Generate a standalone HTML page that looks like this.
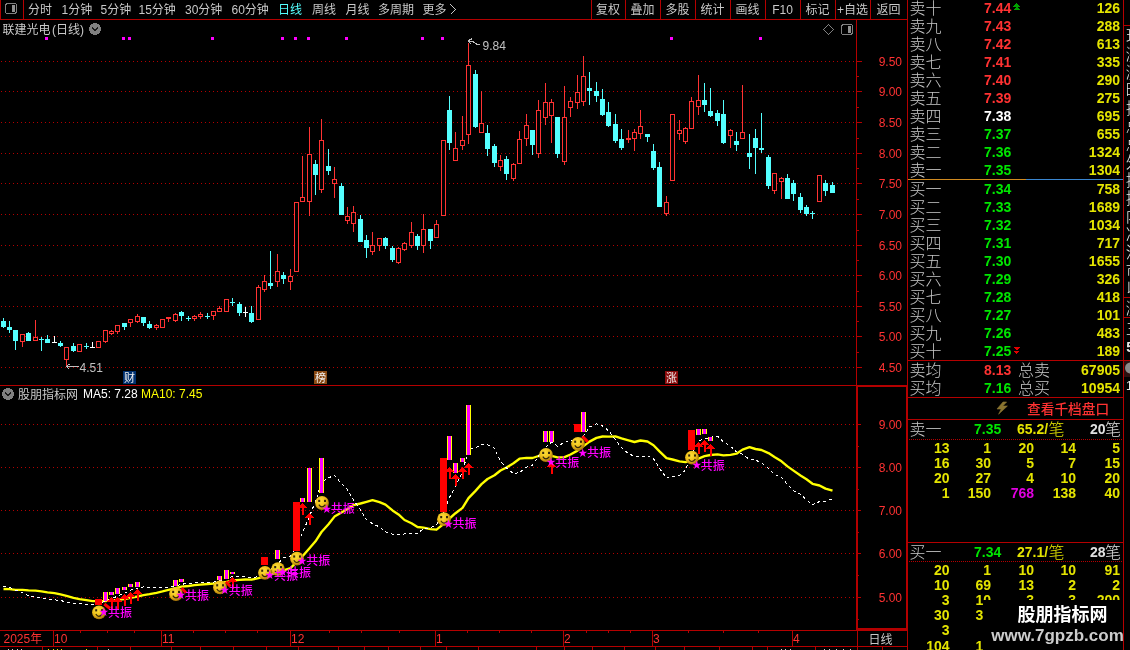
<!DOCTYPE html>
<html lang="zh"><head><meta charset="utf-8"><title>联建光电 日线</title><style>
html,body{margin:0;padding:0;background:#000;}
body{width:1130px;height:650px;overflow:hidden;}
svg{display:block;will-change:transform;}
text{font-family:"Liberation Sans","Noto Sans CJK SC",sans-serif;}
.ax{font-size:12px;}
.dt{font-size:12px;}
.tb{font-size:12px;}
.tag{font-size:11px;}
.sig{font-size:12px;font-weight:500;}
.star{font-size:9.5px;}
.lab{font-size:16px;font-weight:300;}
.num{font-size:14px;font-weight:bold;}
.cjk14{font-size:13.7px;font-weight:500;}
.wm1{font-size:18px;font-weight:bold;}
.wm2{font-size:17px;font-weight:bold;}
</style></head><body><svg width="1130" height="650" viewBox="0 0 1130 650" shape-rendering="crispEdges"><defs><radialGradient id="sg" cx="0.4" cy="0.35" r="0.7"><stop offset="0" stop-color="#ffe23a"/><stop offset="0.55" stop-color="#ecbc18"/><stop offset="1" stop-color="#9a6608"/></radialGradient></defs><rect width="1130" height="650" fill="#000"/>
<rect x="0" y="0" width="1" height="20" fill="#b40000"/>
<rect x="0" y="19" width="908" height="1" fill="#b40000"/>
<rect x="23" y="0" width="1" height="20" fill="#b40000"/>
<rect x="591" y="0" width="1" height="20" fill="#b40000"/>
<rect x="625" y="0" width="1" height="20" fill="#b40000"/>
<rect x="660" y="0" width="1" height="20" fill="#b40000"/>
<rect x="695" y="0" width="1" height="20" fill="#b40000"/>
<rect x="730" y="0" width="1" height="20" fill="#b40000"/>
<rect x="765" y="0" width="1" height="20" fill="#b40000"/>
<rect x="800" y="0" width="1" height="20" fill="#b40000"/>
<rect x="835" y="0" width="1" height="20" fill="#b40000"/>
<rect x="870" y="0" width="1" height="20" fill="#b40000"/>
<rect x="856" y="20" width="1" height="366" fill="#b40000"/>
<rect x="907" y="0" width="1" height="650" fill="#b40000"/>
<rect x="0" y="385" width="857" height="1" fill="#b40000"/>
<rect x="856" y="385" width="2" height="246" fill="#b40000"/>
<rect x="906" y="385" width="2" height="246" fill="#b40000"/>
<rect x="856" y="385" width="52" height="2" fill="#b40000"/>
<rect x="0" y="630" width="908" height="1" fill="#b40000"/>
<rect x="0" y="646" width="908" height="1" fill="#b40000"/>
<rect x="1123" y="0" width="1" height="650" fill="#b40000"/>
<path d="M1 61.5H854" stroke="#b40000" stroke-width="1" stroke-dasharray="1 3" fill="none"/>
<rect x="857" y="61" width="5" height="1" fill="#b40000"/>
<text x="902" y="66" class="ax" fill="#ff3232" text-anchor="end">9.50</text>
<rect x="857" y="76" width="2" height="1" fill="#b40000"/>
<path d="M1 91.5H854" stroke="#b40000" stroke-width="1" stroke-dasharray="1 3" fill="none"/>
<rect x="857" y="91" width="5" height="1" fill="#b40000"/>
<text x="902" y="96" class="ax" fill="#ff3232" text-anchor="end">9.00</text>
<rect x="857" y="107" width="2" height="1" fill="#b40000"/>
<path d="M1 122.5H854" stroke="#b40000" stroke-width="1" stroke-dasharray="1 3" fill="none"/>
<rect x="857" y="122" width="5" height="1" fill="#b40000"/>
<text x="902" y="127" class="ax" fill="#ff3232" text-anchor="end">8.50</text>
<rect x="857" y="138" width="2" height="1" fill="#b40000"/>
<path d="M1 153.5H854" stroke="#b40000" stroke-width="1" stroke-dasharray="1 3" fill="none"/>
<rect x="857" y="153" width="5" height="1" fill="#b40000"/>
<text x="902" y="158" class="ax" fill="#ff3232" text-anchor="end">8.00</text>
<rect x="857" y="168" width="2" height="1" fill="#b40000"/>
<path d="M1 183.5H854" stroke="#b40000" stroke-width="1" stroke-dasharray="1 3" fill="none"/>
<rect x="857" y="183" width="5" height="1" fill="#b40000"/>
<text x="902" y="188" class="ax" fill="#ff3232" text-anchor="end">7.50</text>
<rect x="857" y="199" width="2" height="1" fill="#b40000"/>
<path d="M1 214.5H854" stroke="#b40000" stroke-width="1" stroke-dasharray="1 3" fill="none"/>
<rect x="857" y="214" width="5" height="1" fill="#b40000"/>
<text x="902" y="219" class="ax" fill="#ff3232" text-anchor="end">7.00</text>
<rect x="857" y="230" width="2" height="1" fill="#b40000"/>
<path d="M1 245.5H854" stroke="#b40000" stroke-width="1" stroke-dasharray="1 3" fill="none"/>
<rect x="857" y="245" width="5" height="1" fill="#b40000"/>
<text x="902" y="250" class="ax" fill="#ff3232" text-anchor="end">6.50</text>
<rect x="857" y="260" width="2" height="1" fill="#b40000"/>
<path d="M1 275.5H854" stroke="#b40000" stroke-width="1" stroke-dasharray="1 3" fill="none"/>
<rect x="857" y="275" width="5" height="1" fill="#b40000"/>
<text x="902" y="280" class="ax" fill="#ff3232" text-anchor="end">6.00</text>
<rect x="857" y="291" width="2" height="1" fill="#b40000"/>
<path d="M1 306.5H854" stroke="#b40000" stroke-width="1" stroke-dasharray="1 3" fill="none"/>
<rect x="857" y="306" width="5" height="1" fill="#b40000"/>
<text x="902" y="311" class="ax" fill="#ff3232" text-anchor="end">5.50</text>
<rect x="857" y="321" width="2" height="1" fill="#b40000"/>
<path d="M1 336.5H854" stroke="#b40000" stroke-width="1" stroke-dasharray="1 3" fill="none"/>
<rect x="857" y="336" width="5" height="1" fill="#b40000"/>
<text x="902" y="341" class="ax" fill="#ff3232" text-anchor="end">5.00</text>
<rect x="857" y="352" width="2" height="1" fill="#b40000"/>
<path d="M1 367.5H854" stroke="#b40000" stroke-width="1" stroke-dasharray="1 3" fill="none"/>
<rect x="857" y="367" width="5" height="1" fill="#b40000"/>
<text x="902" y="372" class="ax" fill="#ff3232" text-anchor="end">4.50</text>
<path d="M1 424.5H854" stroke="#b40000" stroke-width="1" stroke-dasharray="1 3" fill="none"/>
<rect x="858" y="424" width="3" height="1" fill="#b40000"/>
<text x="902" y="429" class="ax" fill="#ff3232" text-anchor="end">9.00</text>
<rect x="858" y="446" width="1" height="1" fill="#b40000"/>
<path d="M1 467.5H854" stroke="#b40000" stroke-width="1" stroke-dasharray="1 3" fill="none"/>
<rect x="858" y="467" width="3" height="1" fill="#b40000"/>
<text x="902" y="472" class="ax" fill="#ff3232" text-anchor="end">8.00</text>
<rect x="858" y="489" width="1" height="1" fill="#b40000"/>
<path d="M1 510.5H854" stroke="#b40000" stroke-width="1" stroke-dasharray="1 3" fill="none"/>
<rect x="858" y="510" width="3" height="1" fill="#b40000"/>
<text x="902" y="515" class="ax" fill="#ff3232" text-anchor="end">7.00</text>
<rect x="858" y="532" width="1" height="1" fill="#b40000"/>
<path d="M1 553.5H854" stroke="#b40000" stroke-width="1" stroke-dasharray="1 3" fill="none"/>
<rect x="858" y="553" width="3" height="1" fill="#b40000"/>
<text x="902" y="558" class="ax" fill="#ff3232" text-anchor="end">6.00</text>
<rect x="858" y="575" width="1" height="1" fill="#b40000"/>
<path d="M1 597.5H854" stroke="#b40000" stroke-width="1" stroke-dasharray="1 3" fill="none"/>
<rect x="858" y="597" width="3" height="1" fill="#b40000"/>
<text x="902" y="602" class="ax" fill="#ff3232" text-anchor="end">5.00</text>
<rect x="858" y="619" width="1" height="1" fill="#b40000"/>
<rect x="45" y="37" width="3" height="3" fill="#ff00ff"/>
<rect x="122" y="37" width="3" height="3" fill="#ff00ff"/>
<rect x="128" y="37" width="3" height="3" fill="#ff00ff"/>
<rect x="211" y="37" width="3" height="3" fill="#ff00ff"/>
<rect x="281" y="37" width="3" height="3" fill="#ff00ff"/>
<rect x="294" y="37" width="3" height="3" fill="#ff00ff"/>
<rect x="307" y="37" width="3" height="3" fill="#ff00ff"/>
<rect x="345" y="37" width="3" height="3" fill="#ff00ff"/>
<rect x="421" y="37" width="3" height="3" fill="#ff00ff"/>
<rect x="441" y="37" width="3" height="3" fill="#ff00ff"/>
<rect x="670" y="37" width="3" height="3" fill="#ff00ff"/>
<rect x="759" y="37" width="3" height="3" fill="#ff00ff"/>
<rect x="3" y="318" width="1" height="10" fill="#54ffff"/>
<rect x="1" y="321" width="5" height="6" fill="#54ffff"/>
<rect x="9" y="321" width="1" height="12" fill="#54ffff"/>
<rect x="7" y="327" width="5" height="3" fill="#54ffff"/>
<rect x="15" y="330" width="1" height="20" fill="#54ffff"/>
<rect x="13" y="330" width="5" height="11" fill="#54ffff"/>
<rect x="22" y="342" width="1" height="5" fill="#ff3232"/>
<rect x="20.5" y="334.5" width="4" height="7" fill="#000" stroke="#ff3232" stroke-width="1"/>
<rect x="28" y="332" width="1" height="9" fill="#54ffff"/>
<rect x="26" y="333" width="5" height="8" fill="#54ffff"/>
<rect x="35" y="320" width="1" height="17" fill="#ff3232"/>
<rect x="33.5" y="337.5" width="4" height="3" fill="#000" stroke="#ff3232" stroke-width="1"/>
<rect x="41" y="337" width="1" height="14" fill="#54ffff"/>
<rect x="39" y="339" width="5" height="1" fill="#54ffff"/>
<rect x="47" y="335" width="1" height="8" fill="#54ffff"/>
<rect x="45" y="339" width="5" height="4" fill="#54ffff"/>
<rect x="54" y="336" width="1" height="7" fill="#ffffff"/>
<rect x="52" y="342" width="5" height="1" fill="#ffffff"/>
<rect x="60" y="341" width="1" height="6" fill="#54ffff"/>
<rect x="58" y="343" width="5" height="3" fill="#54ffff"/>
<rect x="66" y="360" width="1" height="7" fill="#ff3232"/>
<rect x="64.5" y="347.5" width="4" height="12" fill="#000" stroke="#ff3232" stroke-width="1"/>
<rect x="73" y="343" width="1" height="9" fill="#54ffff"/>
<rect x="71" y="346" width="5" height="5" fill="#54ffff"/>
<rect x="77.5" y="344.5" width="4" height="7" fill="#000" stroke="#ff3232" stroke-width="1"/>
<rect x="86" y="343" width="1" height="6" fill="#54ffff"/>
<rect x="84" y="346" width="5" height="1" fill="#54ffff"/>
<rect x="92" y="342" width="1" height="6" fill="#ffffff"/>
<rect x="90" y="347" width="5" height="1" fill="#ffffff"/>
<rect x="96.5" y="341.5" width="4" height="6" fill="#000" stroke="#ff3232" stroke-width="1"/>
<rect x="105" y="342" width="1" height="1" fill="#ff3232"/>
<rect x="103.5" y="330.5" width="4" height="11" fill="#000" stroke="#ff3232" stroke-width="1"/>
<rect x="111" y="330" width="1" height="1" fill="#ff3232"/>
<rect x="111" y="334" width="1" height="1" fill="#ff3232"/>
<rect x="109.5" y="331.5" width="4" height="2" fill="#000" stroke="#ff3232" stroke-width="1"/>
<rect x="117" y="332" width="1" height="2" fill="#ff3232"/>
<rect x="115.5" y="325.5" width="4" height="6" fill="#000" stroke="#ff3232" stroke-width="1"/>
<rect x="124" y="323" width="1" height="7" fill="#54ffff"/>
<rect x="122" y="323" width="5" height="4" fill="#54ffff"/>
<rect x="130" y="323" width="1" height="4" fill="#ff3232"/>
<rect x="128.5" y="319.5" width="4" height="3" fill="#000" stroke="#ff3232" stroke-width="1"/>
<rect x="137" y="314" width="1" height="2" fill="#ff3232"/>
<rect x="137" y="322" width="1" height="1" fill="#ff3232"/>
<rect x="135.5" y="316.5" width="4" height="5" fill="#000" stroke="#ff3232" stroke-width="1"/>
<rect x="143" y="317" width="1" height="9" fill="#54ffff"/>
<rect x="141" y="317" width="5" height="6" fill="#54ffff"/>
<rect x="149" y="321" width="1" height="8" fill="#54ffff"/>
<rect x="147" y="324" width="5" height="4" fill="#54ffff"/>
<rect x="156" y="324" width="1" height="1" fill="#ff3232"/>
<rect x="156" y="328" width="1" height="2" fill="#ff3232"/>
<rect x="154.5" y="325.5" width="4" height="2" fill="#000" stroke="#ff3232" stroke-width="1"/>
<rect x="160.5" y="319.5" width="4" height="8" fill="#000" stroke="#ff3232" stroke-width="1"/>
<rect x="168" y="317" width="1" height="5" fill="#ff3232"/>
<rect x="166" y="317" width="5" height="2" fill="#ff3232"/>
<rect x="175" y="313" width="1" height="1" fill="#ff3232"/>
<rect x="175" y="321" width="1" height="1" fill="#ff3232"/>
<rect x="173.5" y="314.5" width="4" height="6" fill="#000" stroke="#ff3232" stroke-width="1"/>
<rect x="181" y="311" width="1" height="10" fill="#54ffff"/>
<rect x="179" y="312" width="5" height="4" fill="#54ffff"/>
<rect x="188" y="316" width="1" height="5" fill="#54ffff"/>
<rect x="186" y="318" width="5" height="1" fill="#54ffff"/>
<rect x="194" y="315" width="1" height="1" fill="#ff3232"/>
<rect x="194" y="319" width="1" height="2" fill="#ff3232"/>
<rect x="192.5" y="316.5" width="4" height="2" fill="#000" stroke="#ff3232" stroke-width="1"/>
<rect x="200" y="312" width="1" height="2" fill="#ff3232"/>
<rect x="200" y="317" width="1" height="2" fill="#ff3232"/>
<rect x="198.5" y="314.5" width="4" height="2" fill="#000" stroke="#ff3232" stroke-width="1"/>
<rect x="207" y="313" width="1" height="6" fill="#54ffff"/>
<rect x="205" y="316" width="5" height="1" fill="#54ffff"/>
<rect x="213" y="316" width="1" height="4" fill="#ff3232"/>
<rect x="211.5" y="311.5" width="4" height="4" fill="#000" stroke="#ff3232" stroke-width="1"/>
<rect x="219" y="306" width="1" height="2" fill="#ff3232"/>
<rect x="217.5" y="308.5" width="4" height="3" fill="#000" stroke="#ff3232" stroke-width="1"/>
<rect x="224.5" y="299.5" width="4" height="12" fill="#000" stroke="#ff3232" stroke-width="1"/>
<rect x="232" y="298" width="1" height="8" fill="#54ffff"/>
<rect x="230" y="302" width="5" height="1" fill="#54ffff"/>
<rect x="239" y="302" width="1" height="14" fill="#54ffff"/>
<rect x="237" y="304" width="5" height="9" fill="#54ffff"/>
<rect x="245" y="307" width="1" height="10" fill="#ffffff"/>
<rect x="243" y="312" width="5" height="1" fill="#ffffff"/>
<rect x="251" y="306" width="1" height="17" fill="#54ffff"/>
<rect x="249" y="313" width="5" height="9" fill="#54ffff"/>
<rect x="258" y="285" width="1" height="2" fill="#ff3232"/>
<rect x="256.5" y="287.5" width="4" height="32" fill="#000" stroke="#ff3232" stroke-width="1"/>
<rect x="264" y="275" width="1" height="6" fill="#ff3232"/>
<rect x="264" y="290" width="1" height="2" fill="#ff3232"/>
<rect x="262.5" y="281.5" width="4" height="8" fill="#000" stroke="#ff3232" stroke-width="1"/>
<rect x="270" y="251" width="1" height="38" fill="#54ffff"/>
<rect x="268" y="283" width="5" height="3" fill="#54ffff"/>
<rect x="277" y="254" width="1" height="17" fill="#ff3232"/>
<rect x="277" y="282" width="1" height="5" fill="#ff3232"/>
<rect x="275.5" y="271.5" width="4" height="10" fill="#000" stroke="#ff3232" stroke-width="1"/>
<rect x="283" y="272" width="1" height="12" fill="#54ffff"/>
<rect x="281" y="275" width="5" height="4" fill="#54ffff"/>
<rect x="290" y="269" width="1" height="7" fill="#ff3232"/>
<rect x="290" y="282" width="1" height="8" fill="#ff3232"/>
<rect x="288.5" y="276.5" width="4" height="5" fill="#000" stroke="#ff3232" stroke-width="1"/>
<rect x="294.5" y="202.5" width="4" height="69" fill="#000" stroke="#ff3232" stroke-width="1"/>
<rect x="302" y="156" width="1" height="41" fill="#ff3232"/>
<rect x="300.5" y="197.5" width="4" height="4" fill="#000" stroke="#ff3232" stroke-width="1"/>
<rect x="309" y="127" width="1" height="27" fill="#ff3232"/>
<rect x="309" y="202" width="1" height="14" fill="#ff3232"/>
<rect x="307.5" y="154.5" width="4" height="47" fill="#000" stroke="#ff3232" stroke-width="1"/>
<rect x="315" y="160" width="1" height="35" fill="#54ffff"/>
<rect x="313" y="164" width="5" height="11" fill="#54ffff"/>
<rect x="321" y="119" width="1" height="21" fill="#ff3232"/>
<rect x="321" y="190" width="1" height="3" fill="#ff3232"/>
<rect x="319.5" y="140.5" width="4" height="49" fill="#000" stroke="#ff3232" stroke-width="1"/>
<rect x="328" y="149" width="1" height="26" fill="#54ffff"/>
<rect x="326" y="166" width="5" height="5" fill="#54ffff"/>
<rect x="334" y="167" width="1" height="12" fill="#ff3232"/>
<rect x="334" y="184" width="1" height="14" fill="#ff3232"/>
<rect x="332.5" y="179.5" width="4" height="4" fill="#000" stroke="#ff3232" stroke-width="1"/>
<rect x="341" y="183" width="1" height="32" fill="#54ffff"/>
<rect x="339" y="186" width="5" height="29" fill="#54ffff"/>
<rect x="347" y="207" width="1" height="9" fill="#ff3232"/>
<rect x="347" y="221" width="1" height="3" fill="#ff3232"/>
<rect x="345.5" y="216.5" width="4" height="4" fill="#000" stroke="#ff3232" stroke-width="1"/>
<rect x="353" y="206" width="1" height="6" fill="#ff3232"/>
<rect x="353" y="224" width="1" height="8" fill="#ff3232"/>
<rect x="351.5" y="212.5" width="4" height="11" fill="#000" stroke="#ff3232" stroke-width="1"/>
<rect x="360" y="215" width="1" height="27" fill="#54ffff"/>
<rect x="358" y="219" width="5" height="23" fill="#54ffff"/>
<rect x="366" y="235" width="1" height="23" fill="#54ffff"/>
<rect x="364" y="240" width="5" height="8" fill="#54ffff"/>
<rect x="372" y="232" width="1" height="13" fill="#ff3232"/>
<rect x="372" y="252" width="1" height="3" fill="#ff3232"/>
<rect x="370.5" y="245.5" width="4" height="6" fill="#000" stroke="#ff3232" stroke-width="1"/>
<rect x="379" y="246" width="1" height="5" fill="#ff3232"/>
<rect x="377.5" y="238.5" width="4" height="7" fill="#000" stroke="#ff3232" stroke-width="1"/>
<rect x="385" y="237" width="1" height="12" fill="#54ffff"/>
<rect x="383" y="238" width="5" height="8" fill="#54ffff"/>
<rect x="392" y="246" width="1" height="16" fill="#54ffff"/>
<rect x="390" y="248" width="5" height="12" fill="#54ffff"/>
<rect x="398" y="247" width="1" height="1" fill="#ff3232"/>
<rect x="398" y="263" width="1" height="1" fill="#ff3232"/>
<rect x="396.5" y="248.5" width="4" height="14" fill="#000" stroke="#ff3232" stroke-width="1"/>
<rect x="404" y="242" width="1" height="1" fill="#ff3232"/>
<rect x="404" y="250" width="1" height="1" fill="#ff3232"/>
<rect x="402.5" y="243.5" width="4" height="6" fill="#000" stroke="#ff3232" stroke-width="1"/>
<rect x="411" y="222" width="1" height="10" fill="#ff3232"/>
<rect x="411" y="246" width="1" height="2" fill="#ff3232"/>
<rect x="409.5" y="232.5" width="4" height="13" fill="#000" stroke="#ff3232" stroke-width="1"/>
<rect x="417" y="234" width="1" height="16" fill="#54ffff"/>
<rect x="415" y="236" width="5" height="10" fill="#54ffff"/>
<rect x="423" y="214" width="1" height="15" fill="#ff3232"/>
<rect x="423" y="246" width="1" height="7" fill="#ff3232"/>
<rect x="421.5" y="229.5" width="4" height="16" fill="#000" stroke="#ff3232" stroke-width="1"/>
<rect x="430" y="229" width="1" height="20" fill="#54ffff"/>
<rect x="428" y="229" width="5" height="12" fill="#54ffff"/>
<rect x="436" y="220" width="1" height="4" fill="#ff3232"/>
<rect x="434.5" y="224.5" width="4" height="13" fill="#000" stroke="#ff3232" stroke-width="1"/>
<rect x="441.5" y="140.5" width="4" height="75" fill="#000" stroke="#ff3232" stroke-width="1"/>
<rect x="449" y="96" width="1" height="54" fill="#54ffff"/>
<rect x="447" y="110" width="5" height="33" fill="#54ffff"/>
<rect x="455" y="132" width="1" height="16" fill="#ff3232"/>
<rect x="453.5" y="148.5" width="4" height="12" fill="#000" stroke="#ff3232" stroke-width="1"/>
<rect x="462" y="116" width="1" height="24" fill="#ff3232"/>
<rect x="462" y="146" width="1" height="4" fill="#ff3232"/>
<rect x="460.5" y="140.5" width="4" height="5" fill="#000" stroke="#ff3232" stroke-width="1"/>
<rect x="468" y="43" width="1" height="22" fill="#ff3232"/>
<rect x="468" y="135" width="1" height="9" fill="#ff3232"/>
<rect x="466.5" y="65.5" width="4" height="69" fill="#000" stroke="#ff3232" stroke-width="1"/>
<rect x="475" y="70" width="1" height="58" fill="#54ffff"/>
<rect x="473" y="74" width="5" height="53" fill="#54ffff"/>
<rect x="481" y="91" width="1" height="32" fill="#ff3232"/>
<rect x="479.5" y="123.5" width="4" height="9" fill="#000" stroke="#ff3232" stroke-width="1"/>
<rect x="487" y="125" width="1" height="31" fill="#54ffff"/>
<rect x="485" y="133" width="5" height="16" fill="#54ffff"/>
<rect x="494" y="144" width="1" height="23" fill="#54ffff"/>
<rect x="492" y="146" width="5" height="17" fill="#54ffff"/>
<rect x="500" y="155" width="1" height="5" fill="#ff3232"/>
<rect x="500" y="167" width="1" height="4" fill="#ff3232"/>
<rect x="498.5" y="160.5" width="4" height="6" fill="#000" stroke="#ff3232" stroke-width="1"/>
<rect x="506" y="156" width="1" height="24" fill="#54ffff"/>
<rect x="504" y="159" width="5" height="15" fill="#54ffff"/>
<rect x="513" y="163" width="1" height="1" fill="#ff3232"/>
<rect x="513" y="179" width="1" height="2" fill="#ff3232"/>
<rect x="511.5" y="164.5" width="4" height="14" fill="#000" stroke="#ff3232" stroke-width="1"/>
<rect x="519" y="131" width="1" height="8" fill="#ff3232"/>
<rect x="517.5" y="139.5" width="4" height="24" fill="#000" stroke="#ff3232" stroke-width="1"/>
<rect x="526" y="114" width="1" height="11" fill="#ff3232"/>
<rect x="526" y="139" width="1" height="7" fill="#ff3232"/>
<rect x="524.5" y="125.5" width="4" height="13" fill="#000" stroke="#ff3232" stroke-width="1"/>
<rect x="532" y="130" width="1" height="25" fill="#54ffff"/>
<rect x="530" y="130" width="5" height="15" fill="#54ffff"/>
<rect x="538" y="100" width="1" height="10" fill="#ff3232"/>
<rect x="538" y="154" width="1" height="4" fill="#ff3232"/>
<rect x="536.5" y="110.5" width="4" height="43" fill="#000" stroke="#ff3232" stroke-width="1"/>
<rect x="545" y="83" width="1" height="19" fill="#ff3232"/>
<rect x="545" y="118" width="1" height="7" fill="#ff3232"/>
<rect x="543.5" y="102.5" width="4" height="15" fill="#000" stroke="#ff3232" stroke-width="1"/>
<rect x="551" y="99" width="1" height="3" fill="#ff3232"/>
<rect x="551" y="116" width="1" height="27" fill="#ff3232"/>
<rect x="549.5" y="102.5" width="4" height="13" fill="#000" stroke="#ff3232" stroke-width="1"/>
<rect x="557" y="117" width="1" height="41" fill="#54ffff"/>
<rect x="555" y="117" width="5" height="37" fill="#54ffff"/>
<rect x="564" y="86" width="1" height="31" fill="#ff3232"/>
<rect x="564" y="162" width="1" height="3" fill="#ff3232"/>
<rect x="562.5" y="117.5" width="4" height="44" fill="#000" stroke="#ff3232" stroke-width="1"/>
<rect x="570" y="97" width="1" height="4" fill="#ff3232"/>
<rect x="570" y="108" width="1" height="9" fill="#ff3232"/>
<rect x="568.5" y="101.5" width="4" height="6" fill="#000" stroke="#ff3232" stroke-width="1"/>
<rect x="577" y="75" width="1" height="17" fill="#ff3232"/>
<rect x="577" y="103" width="1" height="6" fill="#ff3232"/>
<rect x="575.5" y="92.5" width="4" height="10" fill="#000" stroke="#ff3232" stroke-width="1"/>
<rect x="583" y="56" width="1" height="20" fill="#ff3232"/>
<rect x="583" y="102" width="1" height="4" fill="#ff3232"/>
<rect x="581.5" y="76.5" width="4" height="25" fill="#000" stroke="#ff3232" stroke-width="1"/>
<rect x="589" y="72" width="1" height="33" fill="#54ffff"/>
<rect x="587" y="88" width="5" height="3" fill="#54ffff"/>
<rect x="596" y="82" width="1" height="20" fill="#54ffff"/>
<rect x="594" y="91" width="5" height="5" fill="#54ffff"/>
<rect x="602" y="89" width="1" height="27" fill="#54ffff"/>
<rect x="600" y="99" width="5" height="16" fill="#54ffff"/>
<rect x="608" y="102" width="1" height="25" fill="#54ffff"/>
<rect x="606" y="112" width="5" height="14" fill="#54ffff"/>
<rect x="615" y="114" width="1" height="29" fill="#54ffff"/>
<rect x="613" y="124" width="5" height="17" fill="#54ffff"/>
<rect x="621" y="129" width="1" height="21" fill="#54ffff"/>
<rect x="619" y="139" width="5" height="9" fill="#54ffff"/>
<rect x="628" y="130" width="1" height="13" fill="#ff3232"/>
<rect x="626" y="138" width="5" height="2" fill="#ff3232"/>
<rect x="634" y="129" width="1" height="3" fill="#ff3232"/>
<rect x="634" y="139" width="1" height="12" fill="#ff3232"/>
<rect x="632.5" y="132.5" width="4" height="6" fill="#000" stroke="#ff3232" stroke-width="1"/>
<rect x="640" y="110" width="1" height="16" fill="#ff3232"/>
<rect x="640" y="134" width="1" height="5" fill="#ff3232"/>
<rect x="638.5" y="126.5" width="4" height="7" fill="#000" stroke="#ff3232" stroke-width="1"/>
<rect x="647" y="134" width="1" height="8" fill="#54ffff"/>
<rect x="645" y="134" width="5" height="3" fill="#54ffff"/>
<rect x="653" y="144" width="1" height="26" fill="#54ffff"/>
<rect x="651" y="151" width="5" height="17" fill="#54ffff"/>
<rect x="659" y="162" width="1" height="45" fill="#54ffff"/>
<rect x="657" y="167" width="5" height="40" fill="#54ffff"/>
<rect x="666" y="196" width="1" height="6" fill="#ff3232"/>
<rect x="666" y="214" width="1" height="2" fill="#ff3232"/>
<rect x="664.5" y="202.5" width="4" height="11" fill="#000" stroke="#ff3232" stroke-width="1"/>
<rect x="670.5" y="114.5" width="4" height="66" fill="#000" stroke="#ff3232" stroke-width="1"/>
<rect x="679" y="120" width="1" height="10" fill="#ff3232"/>
<rect x="679" y="134" width="1" height="6" fill="#ff3232"/>
<rect x="677.5" y="130.5" width="4" height="3" fill="#000" stroke="#ff3232" stroke-width="1"/>
<rect x="685" y="127" width="1" height="1" fill="#ff3232"/>
<rect x="685" y="142" width="1" height="2" fill="#ff3232"/>
<rect x="683.5" y="128.5" width="4" height="13" fill="#000" stroke="#ff3232" stroke-width="1"/>
<rect x="691" y="97" width="1" height="4" fill="#ff3232"/>
<rect x="689.5" y="101.5" width="4" height="27" fill="#000" stroke="#ff3232" stroke-width="1"/>
<rect x="698" y="75" width="1" height="25" fill="#ff3232"/>
<rect x="698" y="107" width="1" height="8" fill="#ff3232"/>
<rect x="696.5" y="100.5" width="4" height="6" fill="#000" stroke="#ff3232" stroke-width="1"/>
<rect x="704" y="83" width="1" height="29" fill="#54ffff"/>
<rect x="702" y="100" width="5" height="5" fill="#54ffff"/>
<rect x="710" y="88" width="1" height="29" fill="#54ffff"/>
<rect x="708" y="111" width="5" height="5" fill="#54ffff"/>
<rect x="717" y="110" width="1" height="16" fill="#54ffff"/>
<rect x="715" y="113" width="5" height="8" fill="#54ffff"/>
<rect x="723" y="100" width="1" height="44" fill="#54ffff"/>
<rect x="721" y="114" width="5" height="29" fill="#54ffff"/>
<rect x="730" y="129" width="1" height="1" fill="#ff3232"/>
<rect x="730" y="136" width="1" height="12" fill="#ff3232"/>
<rect x="728.5" y="130.5" width="4" height="5" fill="#000" stroke="#ff3232" stroke-width="1"/>
<rect x="736" y="132" width="1" height="19" fill="#54ffff"/>
<rect x="734" y="141" width="5" height="4" fill="#54ffff"/>
<rect x="742" y="85" width="1" height="47" fill="#ff3232"/>
<rect x="740.5" y="132.5" width="4" height="6" fill="#000" stroke="#ff3232" stroke-width="1"/>
<rect x="749" y="134" width="1" height="35" fill="#54ffff"/>
<rect x="747" y="153" width="5" height="4" fill="#54ffff"/>
<rect x="755" y="129" width="1" height="45" fill="#54ffff"/>
<rect x="753" y="138" width="5" height="10" fill="#54ffff"/>
<rect x="761" y="113" width="1" height="40" fill="#54ffff"/>
<rect x="759" y="148" width="5" height="2" fill="#54ffff"/>
<rect x="768" y="155" width="1" height="34" fill="#54ffff"/>
<rect x="766" y="157" width="5" height="29" fill="#54ffff"/>
<rect x="774" y="191" width="1" height="3" fill="#ff3232"/>
<rect x="772.5" y="173.5" width="4" height="17" fill="#000" stroke="#ff3232" stroke-width="1"/>
<rect x="781" y="177" width="1" height="1" fill="#ff3232"/>
<rect x="781" y="182" width="1" height="17" fill="#ff3232"/>
<rect x="779.5" y="178.5" width="4" height="3" fill="#000" stroke="#ff3232" stroke-width="1"/>
<rect x="787" y="174" width="1" height="25" fill="#54ffff"/>
<rect x="785" y="178" width="5" height="21" fill="#54ffff"/>
<rect x="793" y="180" width="1" height="21" fill="#54ffff"/>
<rect x="791" y="183" width="5" height="11" fill="#54ffff"/>
<rect x="800" y="193" width="1" height="20" fill="#54ffff"/>
<rect x="798" y="197" width="5" height="13" fill="#54ffff"/>
<rect x="806" y="205" width="1" height="11" fill="#54ffff"/>
<rect x="804" y="207" width="5" height="7" fill="#54ffff"/>
<rect x="812" y="211" width="1" height="8" fill="#54ffff"/>
<rect x="810" y="213" width="5" height="1" fill="#54ffff"/>
<rect x="817.5" y="175.5" width="4" height="26" fill="#000" stroke="#ff3232" stroke-width="1"/>
<rect x="825" y="180" width="1" height="16" fill="#54ffff"/>
<rect x="823" y="183" width="5" height="8" fill="#54ffff"/>
<rect x="832" y="182" width="1" height="11" fill="#54ffff"/>
<rect x="830" y="185" width="5" height="8" fill="#54ffff"/>
<text x="2.6" y="34" class="tb" fill="#c8c8c8">联建光电<tspan dx="1.5">(日线)</tspan></text>
<circle cx="95" cy="29" r="6" fill="#808080"/>
<path d="M92 27.5l3 3l3 -3" stroke="#1a1a1a" stroke-width="1.4" fill="none"/>
<path d="M828.5 24.5l5 5l-5 5l-5 -5z" stroke="#808080" stroke-width="1" fill="none"/>
<rect x="841.5" y="24.5" width="11" height="10" rx="2.5" fill="none" stroke="#808080"/>
<rect x="848" y="26" width="3" height="7" fill="#909090"/>
<path d="M468.5 40.5l4 -2M468.5 40.5l2 3.5M468.5 40.5l5 1.5l3 2l3 1" stroke="#c0c0c0" stroke-width="1" fill="none"/>
<text x="482.5" y="50" class="ax" fill="#c0c0c0">9.84</text>
<path d="M66.5 366.5h12M66.5 366.5l3 -2.5M66.5 366.5l3 3" stroke="#c0c0c0" stroke-width="1" fill="none"/>
<text x="79.5" y="372" class="ax" fill="#c0c0c0">4.51</text>
<rect x="123" y="371" width="13" height="13" fill="#00306e"/>
<text x="129.5" y="382" class="tag" fill="#f0f0f0" text-anchor="middle">财</text>
<rect x="314" y="371" width="13" height="13" fill="#8a4a14"/>
<text x="320.5" y="382" class="tag" fill="#f0f0f0" text-anchor="middle">榜</text>
<rect x="665" y="371" width="13" height="13" fill="#8a0a0a"/>
<text x="671.5" y="382" class="tag" fill="#f0f0f0" text-anchor="middle">涨</text>
<rect x="5.5" y="3.5" width="11" height="10" rx="2.5" fill="none" stroke="#808080"/>
<rect x="12" y="5" width="3" height="7" fill="#909090"/>
<text x="28" y="14" class="tb" fill="#c8c8c8">分时</text>
<text x="61.5" y="14" class="tb" fill="#c8c8c8">1分钟</text>
<text x="100.5" y="14" class="tb" fill="#c8c8c8">5分钟</text>
<text x="138.5" y="14" class="tb" fill="#c8c8c8">15分钟</text>
<text x="185" y="14" class="tb" fill="#c8c8c8">30分钟</text>
<text x="231.5" y="14" class="tb" fill="#c8c8c8">60分钟</text>
<text x="278" y="14" class="tb" fill="#54ffff">日线</text>
<text x="312" y="14" class="tb" fill="#c8c8c8">周线</text>
<text x="345.5" y="14" class="tb" fill="#c8c8c8">月线</text>
<text x="378" y="14" class="tb" fill="#c8c8c8">多周期</text>
<text x="422.5" y="14" class="tb" fill="#c8c8c8">更多</text>
<path d="M450.5 4.5l5 5l-5 5" stroke="#c8c8c8" stroke-width="1" fill="none"/>
<text x="608" y="14" class="tb" fill="#c8c8c8" text-anchor="middle">复权</text>
<text x="642.5" y="14" class="tb" fill="#c8c8c8" text-anchor="middle">叠加</text>
<text x="677.5" y="14" class="tb" fill="#c8c8c8" text-anchor="middle">多股</text>
<text x="712.5" y="14" class="tb" fill="#c8c8c8" text-anchor="middle">统计</text>
<text x="747.5" y="14" class="tb" fill="#c8c8c8" text-anchor="middle">画线</text>
<text x="782.5" y="14" class="tb" fill="#c8c8c8" text-anchor="middle">F10</text>
<text x="817.5" y="14" class="tb" fill="#c8c8c8" text-anchor="middle">标记</text>
<text x="852.5" y="14" class="tb" fill="#c8c8c8" text-anchor="middle">+自选</text>
<text x="888.5" y="14" class="tb" fill="#c8c8c8" text-anchor="middle">返回</text>
<circle cx="8" cy="394" r="6" fill="#808080"/>
<path d="M5 392.5l3 3l3 -3" stroke="#1a1a1a" stroke-width="1.4" fill="none"/>
<text x="18" y="399" class="tb" fill="#c8c8c8">股朋指标网</text>
<text x="83" y="398" class="ax" fill="#ffffff">MA5: 7.28</text>
<text x="141" y="398" class="ax" fill="#ffff00">MA10: 7.45</text>
<polyline points="3.5,589.0 9.5,589.2 15.5,589.8 22.5,589.9 28.5,590.4 35.5,590.7 41.5,591.3 47.5,592.3 54.5,593.2 60.5,594.4 66.5,595.9 73.5,597.8 79.5,599.2 86.5,600.2 92.5,601.1 98.5,601.2 105.5,601.0 111.5,600.4 117.5,599.8 124.5,599.1 130.5,597.8 137.5,596.5 143.5,595.2 149.5,594.2 156.5,592.8 162.5,591.4 168.5,589.8 175.5,588.1 181.5,586.7 188.5,586.0 194.5,585.2 200.5,584.6 207.5,584.0 213.5,583.6 219.5,583.2 226.5,581.9 232.5,580.5 239.5,579.8 245.5,579.5 251.5,579.7 258.5,578.2 264.5,576.4 270.5,574.6 277.5,572.2 283.5,570.3 290.5,568.1 296.5,562.2 302.5,556.2 309.5,548.3 315.5,541.3 321.5,532.0 328.5,524.3 334.5,516.6 341.5,512.6 347.5,509.1 353.5,505.1 360.5,503.5 366.5,501.8 372.5,500.1 379.5,502.1 385.5,504.7 392.5,510.4 398.5,514.4 404.5,520.0 411.5,523.3 417.5,527.0 423.5,527.7 430.5,529.1 436.5,529.7 443.5,524.2 449.5,518.5 455.5,513.2 462.5,507.9 468.5,498.1 475.5,490.9 481.5,484.1 487.5,479.0 494.5,475.2 500.5,470.5 506.5,467.5 513.5,463.3 519.5,458.7 526.5,457.9 532.5,458.0 538.5,456.0 545.5,453.9 551.5,455.9 557.5,457.4 564.5,457.1 570.5,454.5 577.5,450.6 583.5,446.1 589.5,441.6 596.5,437.9 602.5,436.5 608.5,436.6 615.5,436.4 621.5,438.4 628.5,440.3 634.5,442.0 640.5,440.5 647.5,441.5 653.5,445.2 659.5,451.4 666.5,458.2 672.5,459.5 679.5,461.4 685.5,462.1 691.5,460.8 698.5,458.6 704.5,456.2 710.5,455.0 717.5,454.4 723.5,455.3 730.5,454.9 736.5,453.7 742.5,449.6 749.5,447.2 755.5,449.0 761.5,450.0 768.5,453.1 774.5,457.0 781.5,461.3 787.5,466.4 793.5,470.6 800.5,475.5 806.5,479.3 812.5,483.8 819.5,485.5 825.5,488.6 832.5,490.6" fill="none"  stroke="#ffff00" stroke-width="2.35" stroke-linejoin="round" shape-rendering="geometricPrecision"/>
<polyline points="3.5,586.2 9.5,587.1 15.5,590.1 22.5,592.5 28.5,595.7 35.5,597.1 41.5,598.4 47.5,598.7 54.5,599.8 60.5,600.5 66.5,602.0 73.5,603.6 79.5,603.8 86.5,604.4 92.5,604.6 98.5,603.8 105.5,600.8 111.5,599.0 117.5,596.0 124.5,593.2 130.5,590.1 137.5,588.1 143.5,586.9 149.5,587.3 156.5,587.1 162.5,587.1 168.5,587.2 175.5,586.0 181.5,584.3 188.5,583.3 194.5,582.9 200.5,582.5 207.5,582.7 213.5,582.1 219.5,580.7 226.5,578.3 232.5,576.7 239.5,576.2 245.5,576.3 251.5,578.2 258.5,576.5 264.5,573.5 270.5,569.7 277.5,564.0 283.5,557.9 290.5,556.4 296.5,545.2 302.5,532.7 309.5,516.2 315.5,501.5 321.5,482.2 328.5,477.8 334.5,475.3 341.5,483.8 347.5,489.7 353.5,499.9 360.5,509.9 366.5,519.6 372.5,523.8 379.5,526.9 385.5,531.7 392.5,534.2 398.5,534.2 404.5,534.0 411.5,533.1 417.5,533.1 423.5,528.8 430.5,527.8 436.5,525.1 443.5,512.1 449.5,497.6 455.5,486.1 462.5,471.9 468.5,449.4 475.5,447.6 481.5,444.8 487.5,444.9 494.5,448.1 500.5,461.4 506.5,468.0 513.5,473.8 519.5,472.5 526.5,467.2 532.5,465.1 538.5,456.1 545.5,447.4 551.5,442.2 557.5,446.2 564.5,442.3 570.5,441.0 577.5,439.5 583.5,435.9 589.5,427.0 596.5,423.9 602.5,425.9 608.5,430.7 615.5,439.8 621.5,447.8 628.5,453.8 634.5,456.3 640.5,456.3 647.5,455.8 653.5,458.6 659.5,468.3 666.5,478.1 672.5,476.5 679.5,475.5 685.5,469.9 691.5,455.1 698.5,440.6 704.5,439.3 710.5,437.2 717.5,436.2 723.5,442.0 730.5,446.3 736.5,451.9 742.5,454.3 749.5,459.4 755.5,460.1 761.5,462.7 768.5,468.5 774.5,474.3 781.5,477.3 787.5,484.6 793.5,490.9 800.5,494.2 806.5,500.0 812.5,504.9 819.5,501.6 825.5,501.1 832.5,498.8" fill="none" stroke="#ffffff" stroke-width="1" stroke-dasharray="3 3" shape-rendering="crispEdges"/>
<rect x="95" y="599" width="7" height="6" fill="#ff0000"/>
<rect x="261" y="557" width="7" height="8" fill="#ff0000"/>
<rect x="293" y="502" width="7" height="49" fill="#ff0000"/>
<rect x="440" y="458" width="7" height="54" fill="#ff0000"/>
<rect x="574" y="424" width="7" height="8" fill="#ff0000"/>
<rect x="688" y="430" width="7" height="20" fill="#ff0000"/>
<rect x="103" y="592" width="5" height="9" fill="#ffff00"/>
<rect x="104" y="592" width="3" height="9" fill="#ff00ff"/>
<rect x="109" y="592" width="5" height="3" fill="#ffff00"/>
<rect x="110" y="592" width="3" height="3" fill="#ff00ff"/>
<rect x="115" y="588" width="5" height="6" fill="#ffff00"/>
<rect x="116" y="588" width="3" height="6" fill="#ff00ff"/>
<rect x="122" y="587" width="5" height="3" fill="#ffff00"/>
<rect x="123" y="587" width="3" height="3" fill="#ff00ff"/>
<rect x="128" y="584" width="5" height="3" fill="#ffff00"/>
<rect x="129" y="584" width="3" height="3" fill="#ff00ff"/>
<rect x="135" y="582" width="5" height="5" fill="#ffff00"/>
<rect x="136" y="582" width="3" height="5" fill="#ff00ff"/>
<rect x="173" y="580" width="5" height="6" fill="#ffff00"/>
<rect x="174" y="580" width="3" height="6" fill="#ff00ff"/>
<rect x="179" y="579" width="5" height="3" fill="#ffff00"/>
<rect x="180" y="579" width="3" height="3" fill="#ff00ff"/>
<rect x="217" y="576" width="5" height="4" fill="#ffff00"/>
<rect x="218" y="576" width="3" height="4" fill="#ff00ff"/>
<rect x="224" y="570" width="5" height="9" fill="#ffff00"/>
<rect x="225" y="570" width="3" height="9" fill="#ff00ff"/>
<rect x="230" y="572" width="5" height="2" fill="#ffff00"/>
<rect x="231" y="572" width="3" height="2" fill="#ff00ff"/>
<rect x="275" y="550" width="5" height="9" fill="#ffff00"/>
<rect x="276" y="550" width="3" height="9" fill="#ff00ff"/>
<rect x="300" y="498" width="5" height="4" fill="#ffff00"/>
<rect x="301" y="498" width="3" height="4" fill="#ff00ff"/>
<rect x="307" y="468" width="5" height="34" fill="#ffff00"/>
<rect x="308" y="468" width="3" height="34" fill="#ff00ff"/>
<rect x="319" y="458" width="5" height="35" fill="#ffff00"/>
<rect x="320" y="458" width="3" height="35" fill="#ff00ff"/>
<rect x="447" y="436" width="5" height="24" fill="#ffff00"/>
<rect x="448" y="436" width="3" height="24" fill="#ff00ff"/>
<rect x="453" y="463" width="5" height="10" fill="#ffff00"/>
<rect x="454" y="463" width="3" height="10" fill="#ff00ff"/>
<rect x="460" y="458" width="5" height="4" fill="#ffff00"/>
<rect x="461" y="458" width="3" height="4" fill="#ff00ff"/>
<rect x="466" y="405" width="5" height="50" fill="#ffff00"/>
<rect x="467" y="405" width="3" height="50" fill="#ff00ff"/>
<rect x="543" y="431" width="5" height="11" fill="#ffff00"/>
<rect x="544" y="431" width="3" height="11" fill="#ff00ff"/>
<rect x="549" y="431" width="5" height="11" fill="#ffff00"/>
<rect x="550" y="431" width="3" height="11" fill="#ff00ff"/>
<rect x="581" y="412" width="5" height="20" fill="#ffff00"/>
<rect x="582" y="412" width="3" height="20" fill="#ff00ff"/>
<rect x="696" y="429" width="5" height="6" fill="#ffff00"/>
<rect x="697" y="429" width="3" height="6" fill="#ff00ff"/>
<rect x="702" y="429" width="5" height="5" fill="#ffff00"/>
<rect x="703" y="429" width="3" height="5" fill="#ff00ff"/>
<rect x="708" y="437" width="5" height="4" fill="#ffff00"/>
<rect x="709" y="437" width="3" height="4" fill="#ff00ff"/>
<path d="M104.3 604L110 608.5" stroke="#ff0000" stroke-width="3" fill="none" shape-rendering="geometricPrecision"/>
<path d="M181.5 588L186 592.7" stroke="#ff0000" stroke-width="3" fill="none" shape-rendering="geometricPrecision"/>
<path d="M225.8 581.7L230.5 586.5" stroke="#ff0000" stroke-width="3" fill="none" shape-rendering="geometricPrecision"/>
<path d="M582.3 436.3L587.8 441.9" stroke="#ff0000" stroke-width="3" fill="none" shape-rendering="geometricPrecision"/>
<path d="M111.5 597l4.5 5h-3.5v7h-2v-7h-3.5z" fill="#ff0000"/>
<path d="M117.5 597l4.5 5h-3.5v7h-2v-7h-3.5z" fill="#ff0000"/>
<path d="M124.5 594l4.5 5h-3.5v7h-2v-7h-3.5z" fill="#ff0000"/>
<path d="M130.5 592l4.5 5h-3.5v7h-2v-7h-3.5z" fill="#ff0000"/>
<path d="M137.5 589l4.5 5h-3.5v7h-2v-7h-3.5z" fill="#ff0000"/>
<path d="M232.5 577l4.5 5h-3.5v7h-2v-7h-3.5z" fill="#ff0000"/>
<path d="M302.5 503l4.5 5h-3.5v7h-2v-7h-3.5z" fill="#ff0000"/>
<path d="M309.5 513l4.5 5h-3.5v7h-2v-7h-3.5z" fill="#ff0000"/>
<path d="M449.5 467l4.5 5h-3.5v7h-2v-7h-3.5z" fill="#ff0000"/>
<path d="M455.5 474l4.5 5h-3.5v7h-2v-7h-3.5z" fill="#ff0000"/>
<path d="M462.5 467l4.5 5h-3.5v7h-2v-7h-3.5z" fill="#ff0000"/>
<path d="M468.5 463l4.5 5h-3.5v7h-2v-7h-3.5z" fill="#ff0000"/>
<path d="M551.5 462l4.5 5h-3.5v7h-2v-7h-3.5z" fill="#ff0000"/>
<path d="M698.5 442l4.5 5h-3.5v7h-2v-7h-3.5z" fill="#ff0000"/>
<path d="M704.5 440l4.5 5h-3.5v7h-2v-7h-3.5z" fill="#ff0000"/>
<path d="M710.5 444l4.5 5h-3.5v7h-2v-7h-3.5z" fill="#ff0000"/>
<g transform="translate(99.0,612.4)" shape-rendering="geometricPrecision"><circle r="6.9" fill="url(#sg)"/><rect x="-3.8" y="-3.2" width="2" height="2.2" fill="#33260a"/><rect x="2.0" y="-3.2" width="2" height="2.2" fill="#33260a"/><path d="M-3.2 1.6Q-0.3 6.2 3.4 1.6" stroke="#33260a" stroke-width="1.2" fill="none"/></g>
<g transform="translate(176.0,594.0)" shape-rendering="geometricPrecision"><circle r="6.9" fill="url(#sg)"/><rect x="-3.8" y="-3.2" width="2" height="2.2" fill="#33260a"/><rect x="2.0" y="-3.2" width="2" height="2.2" fill="#33260a"/><path d="M-3.2 1.6Q-0.3 6.2 3.4 1.6" stroke="#33260a" stroke-width="1.2" fill="none"/></g>
<g transform="translate(220.0,587.4)" shape-rendering="geometricPrecision"><circle r="6.9" fill="url(#sg)"/><rect x="-3.8" y="-3.2" width="2" height="2.2" fill="#33260a"/><rect x="2.0" y="-3.2" width="2" height="2.2" fill="#33260a"/><path d="M-3.2 1.6Q-0.3 6.2 3.4 1.6" stroke="#33260a" stroke-width="1.2" fill="none"/></g>
<g transform="translate(265.0,572.8)" shape-rendering="geometricPrecision"><circle r="6.9" fill="url(#sg)"/><rect x="-3.8" y="-3.2" width="2" height="2.2" fill="#33260a"/><rect x="2.0" y="-3.2" width="2" height="2.2" fill="#33260a"/><path d="M-3.2 1.6Q-0.3 6.2 3.4 1.6" stroke="#33260a" stroke-width="1.2" fill="none"/></g>
<g transform="translate(278.0,569.2)" shape-rendering="geometricPrecision"><circle r="6.9" fill="url(#sg)"/><rect x="-3.8" y="-3.2" width="2" height="2.2" fill="#33260a"/><rect x="2.0" y="-3.2" width="2" height="2.2" fill="#33260a"/><path d="M-3.2 1.6Q-0.3 6.2 3.4 1.6" stroke="#33260a" stroke-width="1.2" fill="none"/></g>
<g transform="translate(297.0,558.6)" shape-rendering="geometricPrecision"><circle r="6.9" fill="url(#sg)"/><rect x="-3.8" y="-3.2" width="2" height="2.2" fill="#33260a"/><rect x="2.0" y="-3.2" width="2" height="2.2" fill="#33260a"/><path d="M-3.2 1.6Q-0.3 6.2 3.4 1.6" stroke="#33260a" stroke-width="1.2" fill="none"/></g>
<g transform="translate(322.0,503.0)" shape-rendering="geometricPrecision"><circle r="6.9" fill="url(#sg)"/><rect x="-3.8" y="-3.2" width="2" height="2.2" fill="#33260a"/><rect x="2.0" y="-3.2" width="2" height="2.2" fill="#33260a"/><path d="M-3.2 1.6Q-0.3 6.2 3.4 1.6" stroke="#33260a" stroke-width="1.2" fill="none"/></g>
<g transform="translate(444.0,519.2)" shape-rendering="geometricPrecision"><circle r="6.9" fill="url(#sg)"/><rect x="-3.8" y="-3.2" width="2" height="2.2" fill="#33260a"/><rect x="2.0" y="-3.2" width="2" height="2.2" fill="#33260a"/><path d="M-3.2 1.6Q-0.3 6.2 3.4 1.6" stroke="#33260a" stroke-width="1.2" fill="none"/></g>
<g transform="translate(546.0,455.0)" shape-rendering="geometricPrecision"><circle r="6.9" fill="url(#sg)"/><rect x="-3.8" y="-3.2" width="2" height="2.2" fill="#33260a"/><rect x="2.0" y="-3.2" width="2" height="2.2" fill="#33260a"/><path d="M-3.2 1.6Q-0.3 6.2 3.4 1.6" stroke="#33260a" stroke-width="1.2" fill="none"/></g>
<g transform="translate(578.0,443.8)" shape-rendering="geometricPrecision"><circle r="6.9" fill="url(#sg)"/><rect x="-3.8" y="-3.2" width="2" height="2.2" fill="#33260a"/><rect x="2.0" y="-3.2" width="2" height="2.2" fill="#33260a"/><path d="M-3.2 1.6Q-0.3 6.2 3.4 1.6" stroke="#33260a" stroke-width="1.2" fill="none"/></g>
<g transform="translate(692.0,457.6)" shape-rendering="geometricPrecision"><circle r="6.9" fill="url(#sg)"/><rect x="-3.8" y="-3.2" width="2" height="2.2" fill="#33260a"/><rect x="2.0" y="-3.2" width="2" height="2.2" fill="#33260a"/><path d="M-3.2 1.6Q-0.3 6.2 3.4 1.6" stroke="#33260a" stroke-width="1.2" fill="none"/></g>
<text x="99.0" y="616.5" class="sig" fill="#ff00ff"><tspan class="star" dy="-1.5">★</tspan><tspan x="107.9" dy="1.5">共振</tspan></text>
<text x="176.1" y="599.5" class="sig" fill="#ff00ff"><tspan class="star" dy="-1.5">★</tspan><tspan x="185.0" dy="1.5">共振</tspan></text>
<text x="219.9" y="594.6" class="sig" fill="#ff00ff"><tspan class="star" dy="-1.5">★</tspan><tspan x="228.8" dy="1.5">共振</tspan></text>
<text x="265.0" y="579.9" class="sig" fill="#ff00ff"><tspan class="star" dy="-1.5">★</tspan><tspan x="273.9" dy="1.5">共振</tspan></text>
<text x="278.1" y="576.7" class="sig" fill="#ff00ff"><tspan class="star" dy="-1.5">★</tspan><tspan x="287.0" dy="1.5">共振</tspan></text>
<text x="297.3" y="565.4" class="sig" fill="#ff00ff"><tspan class="star" dy="-1.5">★</tspan><tspan x="306.2" dy="1.5">共振</tspan></text>
<text x="321.9" y="513.1" class="sig" fill="#ff00ff"><tspan class="star" dy="-1.5">★</tspan><tspan x="330.8" dy="1.5">共振</tspan></text>
<text x="443.7" y="528.3" class="sig" fill="#ff00ff"><tspan class="star" dy="-1.5">★</tspan><tspan x="452.6" dy="1.5">共振</tspan></text>
<text x="546.3" y="466.7" class="sig" fill="#ff00ff"><tspan class="star" dy="-1.5">★</tspan><tspan x="555.2" dy="1.5">共振</tspan></text>
<text x="578.0" y="457.0" class="sig" fill="#ff00ff"><tspan class="star" dy="-1.5">★</tspan><tspan x="586.9" dy="1.5">共振</tspan></text>
<text x="691.9" y="469.6" class="sig" fill="#ff00ff"><tspan class="star" dy="-1.5">★</tspan><tspan x="700.8" dy="1.5">共振</tspan></text>
<text x="3.5" y="643" class="dt" fill="#ff3232">2025年</text>
<rect x="53" y="631" width="1" height="15" fill="#b40000"/>
<text x="54" y="643" class="dt" fill="#ff3232">10</text>
<rect x="161" y="631" width="1" height="15" fill="#b40000"/>
<text x="162" y="643" class="dt" fill="#ff3232">11</text>
<rect x="290" y="631" width="1" height="15" fill="#b40000"/>
<text x="291" y="643" class="dt" fill="#ff3232">12</text>
<rect x="435" y="631" width="1" height="15" fill="#b40000"/>
<text x="436" y="643" class="dt" fill="#ff3232">1</text>
<rect x="563" y="631" width="1" height="15" fill="#b40000"/>
<text x="564" y="643" class="dt" fill="#ff3232">2</text>
<rect x="652" y="631" width="1" height="15" fill="#b40000"/>
<text x="653" y="643" class="dt" fill="#ff3232">3</text>
<rect x="792" y="631" width="1" height="15" fill="#b40000"/>
<text x="793" y="643" class="dt" fill="#ff3232">4</text>
<rect x="80" y="631" width="1" height="2" fill="#b40000"/>
<rect x="107" y="631" width="1" height="2" fill="#b40000"/>
<rect x="134" y="631" width="1" height="2" fill="#b40000"/>
<rect x="193" y="631" width="1" height="2" fill="#b40000"/>
<rect x="225" y="631" width="1" height="2" fill="#b40000"/>
<rect x="257" y="631" width="1" height="2" fill="#b40000"/>
<rect x="329" y="631" width="1" height="2" fill="#b40000"/>
<rect x="361" y="631" width="1" height="2" fill="#b40000"/>
<rect x="399" y="631" width="1" height="2" fill="#b40000"/>
<rect x="467" y="631" width="1" height="2" fill="#b40000"/>
<rect x="499" y="631" width="1" height="2" fill="#b40000"/>
<rect x="531" y="631" width="1" height="2" fill="#b40000"/>
<rect x="586" y="631" width="1" height="2" fill="#b40000"/>
<rect x="608" y="631" width="1" height="2" fill="#b40000"/>
<rect x="630" y="631" width="1" height="2" fill="#b40000"/>
<rect x="688" y="631" width="1" height="2" fill="#b40000"/>
<rect x="723" y="631" width="1" height="2" fill="#b40000"/>
<rect x="758" y="631" width="1" height="2" fill="#b40000"/>
<rect x="857" y="631" width="1" height="16" fill="#b40000"/>
<rect x="856" y="628" width="52" height="2" fill="#b40000"/>
<text x="880.5" y="644" class="tb" fill="#c8c8c8" text-anchor="middle">日线</text>
<rect x="42" y="647" width="1" height="3" fill="#b40000"/>
<rect x="97" y="647" width="1" height="3" fill="#b40000"/>
<rect x="130" y="647" width="1" height="3" fill="#b40000"/>
<rect x="171" y="647" width="1" height="3" fill="#b40000"/>
<rect x="200" y="647" width="1" height="3" fill="#b40000"/>
<rect x="233" y="647" width="1" height="3" fill="#b40000"/>
<rect x="266" y="647" width="1" height="3" fill="#b40000"/>
<rect x="298" y="647" width="1" height="3" fill="#b40000"/>
<rect x="338" y="647" width="1" height="3" fill="#b40000"/>
<rect x="364" y="647" width="1" height="3" fill="#b40000"/>
<rect x="388" y="647" width="1" height="3" fill="#b40000"/>
<rect x="420" y="647" width="1" height="3" fill="#b40000"/>
<rect x="446" y="647" width="1" height="3" fill="#b40000"/>
<rect x="478" y="647" width="1" height="3" fill="#b40000"/>
<rect x="536" y="647" width="1" height="3" fill="#b40000"/>
<rect x="564" y="647" width="1" height="3" fill="#b40000"/>
<rect x="592" y="647" width="1" height="3" fill="#b40000"/>
<rect x="624" y="647" width="1" height="3" fill="#b40000"/>
<rect x="655" y="647" width="1" height="3" fill="#b40000"/>
<rect x="684" y="647" width="1" height="3" fill="#b40000"/>
<rect x="719" y="647" width="1" height="3" fill="#b40000"/>
<rect x="752" y="647" width="1" height="3" fill="#b40000"/>
<rect x="767" y="647" width="1" height="3" fill="#b40000"/>
<rect x="815" y="647" width="1" height="3" fill="#b40000"/>
<rect x="857" y="647" width="1" height="3" fill="#b40000"/>
<rect x="882" y="647" width="1" height="3" fill="#b40000"/>
<rect x="8" y="649" width="1" height="1" fill="#d0d0d0"/>
<rect x="12" y="649" width="1" height="1" fill="#d0d0d0"/>
<rect x="17" y="649" width="1" height="1" fill="#d0d0d0"/>
<rect x="21" y="649" width="1" height="1" fill="#d0d0d0"/>
<rect x="48" y="649" width="1" height="1" fill="#e4e400"/>
<rect x="53" y="649" width="1" height="1" fill="#e4e400"/>
<rect x="57" y="649" width="1" height="1" fill="#e4e400"/>
<rect x="61" y="649" width="1" height="1" fill="#e4e400"/>
<rect x="86" y="649" width="1" height="1" fill="#e4e400"/>
<rect x="108" y="649" width="1" height="1" fill="#d0d0d0"/>
<rect x="781" y="649" width="1" height="1" fill="#d0d0d0"/>
<rect x="785" y="649" width="1" height="1" fill="#d0d0d0"/>
<rect x="790" y="649" width="1" height="1" fill="#d0d0d0"/>
<rect x="824" y="649" width="1" height="1" fill="#d0d0d0"/>
<rect x="829" y="649" width="1" height="1" fill="#d0d0d0"/>
<rect x="836" y="649" width="1" height="1" fill="#d0d0d0"/>
<rect x="843" y="649" width="1" height="1" fill="#d0d0d0"/>
<rect x="850" y="649" width="1" height="1" fill="#d0d0d0"/>
<text x="909.5" y="14" class="lab" fill="#c8c8c8">卖十</text>
<text x="984" y="13" class="num" fill="#ff3232">7.44</text>
<text x="1120" y="13" class="num" fill="#e4e400" text-anchor="end">126</text>
<text x="909.5" y="32" class="lab" fill="#c8c8c8">卖九</text>
<text x="984" y="31" class="num" fill="#ff3232">7.43</text>
<text x="1120" y="31" class="num" fill="#e4e400" text-anchor="end">288</text>
<text x="909.5" y="50" class="lab" fill="#c8c8c8">卖八</text>
<text x="984" y="49" class="num" fill="#ff3232">7.42</text>
<text x="1120" y="49" class="num" fill="#e4e400" text-anchor="end">613</text>
<text x="909.5" y="68" class="lab" fill="#c8c8c8">卖七</text>
<text x="984" y="67" class="num" fill="#ff3232">7.41</text>
<text x="1120" y="67" class="num" fill="#e4e400" text-anchor="end">335</text>
<text x="909.5" y="86" class="lab" fill="#c8c8c8">卖六</text>
<text x="984" y="85" class="num" fill="#ff3232">7.40</text>
<text x="1120" y="85" class="num" fill="#e4e400" text-anchor="end">290</text>
<text x="909.5" y="104" class="lab" fill="#c8c8c8">卖五</text>
<text x="984" y="103" class="num" fill="#ff3232">7.39</text>
<text x="1120" y="103" class="num" fill="#e4e400" text-anchor="end">275</text>
<text x="909.5" y="122" class="lab" fill="#c8c8c8">卖四</text>
<text x="984" y="121" class="num" fill="#ffffff">7.38</text>
<text x="1120" y="121" class="num" fill="#e4e400" text-anchor="end">695</text>
<text x="909.5" y="140" class="lab" fill="#c8c8c8">卖三</text>
<text x="984" y="139" class="num" fill="#00e600">7.37</text>
<text x="1120" y="139" class="num" fill="#e4e400" text-anchor="end">655</text>
<text x="909.5" y="158" class="lab" fill="#c8c8c8">卖二</text>
<text x="984" y="157" class="num" fill="#00e600">7.36</text>
<text x="1120" y="157" class="num" fill="#e4e400" text-anchor="end">1324</text>
<text x="909.5" y="176" class="lab" fill="#c8c8c8">卖一</text>
<text x="984" y="175" class="num" fill="#00e600">7.35</text>
<text x="1120" y="175" class="num" fill="#e4e400" text-anchor="end">1304</text>
<rect x="908" y="179" width="118" height="1" fill="#d08a20"/>
<rect x="1026" y="179" width="97" height="1" fill="#3a86d0"/>
<text x="909.5" y="195" class="lab" fill="#c8c8c8">买一</text>
<text x="984" y="194" class="num" fill="#00e600">7.34</text>
<text x="1120" y="194" class="num" fill="#e4e400" text-anchor="end">758</text>
<text x="909.5" y="213" class="lab" fill="#c8c8c8">买二</text>
<text x="984" y="212" class="num" fill="#00e600">7.33</text>
<text x="1120" y="212" class="num" fill="#e4e400" text-anchor="end">1689</text>
<text x="909.5" y="231" class="lab" fill="#c8c8c8">买三</text>
<text x="984" y="230" class="num" fill="#00e600">7.32</text>
<text x="1120" y="230" class="num" fill="#e4e400" text-anchor="end">1034</text>
<text x="909.5" y="249" class="lab" fill="#c8c8c8">买四</text>
<text x="984" y="248" class="num" fill="#00e600">7.31</text>
<text x="1120" y="248" class="num" fill="#e4e400" text-anchor="end">717</text>
<text x="909.5" y="267" class="lab" fill="#c8c8c8">买五</text>
<text x="984" y="266" class="num" fill="#00e600">7.30</text>
<text x="1120" y="266" class="num" fill="#e4e400" text-anchor="end">1655</text>
<text x="909.5" y="285" class="lab" fill="#c8c8c8">买六</text>
<text x="984" y="284" class="num" fill="#00e600">7.29</text>
<text x="1120" y="284" class="num" fill="#e4e400" text-anchor="end">326</text>
<text x="909.5" y="303" class="lab" fill="#c8c8c8">买七</text>
<text x="984" y="302" class="num" fill="#00e600">7.28</text>
<text x="1120" y="302" class="num" fill="#e4e400" text-anchor="end">418</text>
<text x="909.5" y="321" class="lab" fill="#c8c8c8">买八</text>
<text x="984" y="320" class="num" fill="#00e600">7.27</text>
<text x="1120" y="320" class="num" fill="#e4e400" text-anchor="end">101</text>
<text x="909.5" y="339" class="lab" fill="#c8c8c8">买九</text>
<text x="984" y="338" class="num" fill="#00e600">7.26</text>
<text x="1120" y="338" class="num" fill="#e4e400" text-anchor="end">483</text>
<text x="909.5" y="357" class="lab" fill="#c8c8c8">买十</text>
<text x="984" y="356" class="num" fill="#00e600">7.25</text>
<text x="1120" y="356" class="num" fill="#e4e400" text-anchor="end">189</text>
<path d="M1016.5 3l3.5 3.5h-7zM1016.5 6.5l3.5 3.5h-7z" fill="#00a000"/>
<path d="M1016.5 354l3.5 -3.5h-7zM1016.5 350.5l3.5 -3.5h-7z" fill="#e00000"/>
<rect x="908" y="360" width="216" height="1" fill="#b40000"/>
<text x="909.5" y="376" class="lab" fill="#c8c8c8">卖均</text>
<text x="984" y="374.5" class="num" fill="#ff3232">8.13</text>
<text x="1018" y="376" class="lab" fill="#c8c8c8">总卖</text>
<text x="1120" y="374.5" class="num" fill="#e4e400" text-anchor="end">67905</text>
<text x="909.5" y="394" class="lab" fill="#c8c8c8">买均</text>
<text x="984" y="392.5" class="num" fill="#00e600">7.16</text>
<text x="1018" y="394" class="lab" fill="#c8c8c8">总买</text>
<text x="1120" y="392.5" class="num" fill="#e4e400" text-anchor="end">10954</text>
<rect x="908" y="397" width="216" height="1" fill="#b40000"/>
<path d="M1003 402L997 409h4.2L998.6 414.2L1007.4 406h-4.6L1006.6 402z" fill="#8a7430" stroke="#8a7430" stroke-width="0.6" shape-rendering="geometricPrecision"/>
<text x="1027" y="414" class="cjk14" fill="#ff3232">查看千档盘口</text>
<rect x="908" y="419" width="216" height="1" fill="#b40000"/>
<text x="909.5" y="435" class="lab" fill="#c8c8c8">卖一</text>
<text x="974" y="433.5" class="num" fill="#00e600">7.35</text>
<text x="1017" y="433.5" class="num" fill="#e4e400">65.2/</text>
<text x="1048.5" y="435" class="lab" fill="#e4e400">笔</text>
<text x="1090" y="433.5" class="num" fill="#e0e0e0">20</text>
<text x="1105" y="435" class="lab" fill="#e0e0e0">笔</text>
<path d="M909 439.5H1123" stroke="#b40000" stroke-width="1" stroke-dasharray="1 1" fill="none"/>
<text x="949.5" y="453.0" class="num" fill="#e4e400" text-anchor="end">13</text>
<text x="991" y="453.0" class="num" fill="#e4e400" text-anchor="end">1</text>
<text x="1034" y="453.0" class="num" fill="#e4e400" text-anchor="end">20</text>
<text x="1076" y="453.0" class="num" fill="#e4e400" text-anchor="end">14</text>
<text x="1120" y="453.0" class="num" fill="#e4e400" text-anchor="end">5</text>
<text x="949.5" y="467.9" class="num" fill="#e4e400" text-anchor="end">16</text>
<text x="991" y="467.9" class="num" fill="#e4e400" text-anchor="end">30</text>
<text x="1034" y="467.9" class="num" fill="#e4e400" text-anchor="end">5</text>
<text x="1076" y="467.9" class="num" fill="#e4e400" text-anchor="end">7</text>
<text x="1120" y="467.9" class="num" fill="#e4e400" text-anchor="end">15</text>
<text x="949.5" y="482.8" class="num" fill="#e4e400" text-anchor="end">20</text>
<text x="991" y="482.8" class="num" fill="#e4e400" text-anchor="end">27</text>
<text x="1034" y="482.8" class="num" fill="#e4e400" text-anchor="end">4</text>
<text x="1076" y="482.8" class="num" fill="#e4e400" text-anchor="end">10</text>
<text x="1120" y="482.8" class="num" fill="#e4e400" text-anchor="end">20</text>
<text x="949.5" y="497.7" class="num" fill="#e4e400" text-anchor="end">1</text>
<text x="991" y="497.7" class="num" fill="#e4e400" text-anchor="end">150</text>
<text x="1034" y="497.7" class="num" fill="#e000e0" text-anchor="end">768</text>
<text x="1076" y="497.7" class="num" fill="#e4e400" text-anchor="end">138</text>
<text x="1120" y="497.7" class="num" fill="#e4e400" text-anchor="end">40</text>
<rect x="908" y="542" width="216" height="1" fill="#b40000"/>
<text x="909.5" y="558" class="lab" fill="#c8c8c8">买一</text>
<text x="974" y="556.5" class="num" fill="#00e600">7.34</text>
<text x="1017" y="556.5" class="num" fill="#e4e400">27.1/</text>
<text x="1048.5" y="558" class="lab" fill="#e4e400">笔</text>
<text x="1090" y="556.5" class="num" fill="#e0e0e0">28</text>
<text x="1105" y="558" class="lab" fill="#e0e0e0">笔</text>
<path d="M909 561.5H1123" stroke="#b40000" stroke-width="1" stroke-dasharray="1 1" fill="none"/>
<text x="949.5" y="575.0" class="num" fill="#e4e400" text-anchor="end">20</text>
<text x="991" y="575.0" class="num" fill="#e4e400" text-anchor="end">1</text>
<text x="1034" y="575.0" class="num" fill="#e4e400" text-anchor="end">10</text>
<text x="1076" y="575.0" class="num" fill="#e4e400" text-anchor="end">10</text>
<text x="1120" y="575.0" class="num" fill="#e4e400" text-anchor="end">91</text>
<text x="949.5" y="590.1" class="num" fill="#e4e400" text-anchor="end">10</text>
<text x="991" y="590.1" class="num" fill="#e4e400" text-anchor="end">69</text>
<text x="1034" y="590.1" class="num" fill="#e4e400" text-anchor="end">13</text>
<text x="1076" y="590.1" class="num" fill="#e4e400" text-anchor="end">2</text>
<text x="1120" y="590.1" class="num" fill="#e4e400" text-anchor="end">2</text>
<text x="949.5" y="605.2" class="num" fill="#e4e400" text-anchor="end">3</text>
<text x="991" y="605.2" class="num" fill="#e4e400" text-anchor="end">10</text>
<text x="1034" y="605.2" class="num" fill="#e4e400" text-anchor="end">3</text>
<text x="1076" y="605.2" class="num" fill="#e4e400" text-anchor="end">3</text>
<text x="1120" y="605.2" class="num" fill="#e4e400" text-anchor="end">200</text>
<text x="949.5" y="620.3" class="num" fill="#e4e400" text-anchor="end">30</text>
<text x="991" y="620.3" class="num" fill="#e4e400" text-anchor="end">35</text>
<text x="949.5" y="635.4" class="num" fill="#e4e400" text-anchor="end">3</text>
<text x="949.5" y="650.5" class="num" fill="#e4e400" text-anchor="end">104</text>
<text x="991" y="650.5" class="num" fill="#e4e400" text-anchor="end">12</text>
<rect x="983" y="600" width="147" height="50" fill="#000000"/>
<text x="1062.5" y="621" class="wm1" fill="#ffffff" text-anchor="middle">股朋指标网</text>
<text x="1057.5" y="641" class="wm2" fill="#cccccc" text-anchor="middle">www.7gpzb.com</text>
<rect x="1123" y="25" width="7" height="1" fill="#b40000"/>
<text x="1125.7" y="42" class="lab" fill="#e8e8e8">现</text>
<text x="1125.7" y="60" class="lab" fill="#e8e8e8">涨</text>
<text x="1125.7" y="78" class="lab" fill="#e8e8e8">涨</text>
<text x="1125.7" y="96" class="lab" fill="#e8e8e8">昨</text>
<text x="1125.7" y="114" class="lab" fill="#e8e8e8">振</text>
<text x="1125.7" y="132" class="lab" fill="#e8e8e8">总</text>
<text x="1125.7" y="150" class="lab" fill="#e8e8e8">总</text>
<text x="1125.7" y="168" class="lab" fill="#e8e8e8">外</text>
<text x="1125.7" y="186" class="lab" fill="#e8e8e8">换</text>
<text x="1125.7" y="204" class="lab" fill="#e8e8e8">换</text>
<text x="1125.7" y="222" class="lab" fill="#e8e8e8">内</text>
<text x="1125.7" y="240" class="lab" fill="#e8e8e8">净</text>
<text x="1125.7" y="258" class="lab" fill="#e8e8e8">流</text>
<text x="1125.7" y="276" class="lab" fill="#e8e8e8">市</text>
<text x="1125.7" y="294" class="lab" fill="#e8e8e8">以</text>
<rect x="1124" y="297" width="6" height="1" fill="#b40000"/>
<text x="1125.7" y="314" class="lab" fill="#e8e8e8">涨</text>
<rect x="1124" y="317" width="6" height="1" fill="#b40000"/>
<text x="1125.7" y="335" class="lab" fill="#e8e8e8">三</text>
<text x="1126.3" y="352" class="num" fill="#e8e8e8">5</text>
<rect x="1124" y="360" width="6" height="1" fill="#b40000"/>
<rect x="1124" y="361" width="6" height="16" fill="#2c1010"/>
<circle cx="1130.5" cy="368" r="5.5" fill="#8a8a8a" shape-rendering="geometricPrecision"/>
<text x="1126" y="390" class="ax" fill="#e8e8e8">1</text>
<rect x="1123" y="0" width="1" height="650" fill="#b40000"/>
</svg></body></html>
